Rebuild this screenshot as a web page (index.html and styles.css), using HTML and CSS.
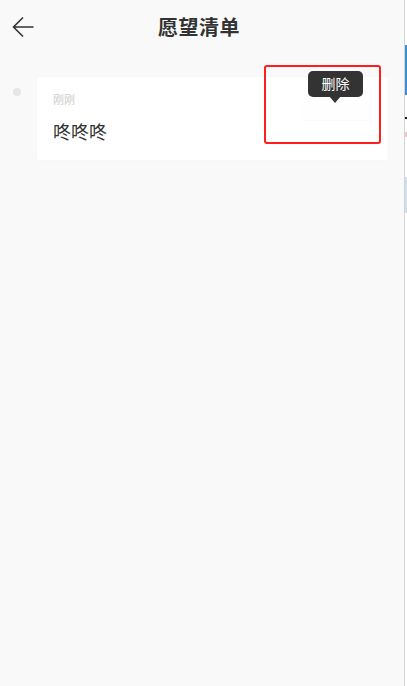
FILE: index.html
```html
<!DOCTYPE html>
<html lang="zh">
<head>
    <meta charset="UTF-8">
    <title>愿望清单</title>
    <link rel="stylesheet" href="styles.css">
</head>
<body>
    <div class="page">
        <div class="header">
            <a class="back" href="javascript:;">
                <svg width="22" height="22" viewBox="0 0 22 22"><path d="M11 1.5 L1.5 11 L11 20.5 M1.5 11 H21.5" fill="none" stroke="#333" stroke-width="1.6"/></svg>
            </a>
            <h1>愿望清单</h1>
        </div>

        <ul class="list">
            <li class="item">
                <em class="dot"></em>
                <div class="card">
                    <p class="time">刚刚</p>
                    <p class="text">咚咚咚</p>
                    <div class="mark"></div>
                    <div class="ghost"></div>
                    <div class="tip">删除<i></i></div>
                </div>
            </li>
        </ul>

        <div class="edge"><span class="b1"></span><span class="b2"></span><span class="b3"></span><span class="b4"></span></div>
    </div>
</body>
</html>
```

FILE: styles.css
```css
body,div,ul,li,p,h1{margin:0;padding:0;}
body{font:14px/1.5 "Liberation Sans","Noto Sans CJK SC",sans-serif;background:#f9f9f9;color:#333;}
ul{list-style-type:none;}
.page{position:relative;width:407px;height:686px;overflow:hidden;background:#f9f9f9;}
.header{position:relative;height:56px;display:flex;align-items:center;justify-content:center;padding-right:9px;}
.header h1{font-size:20px;font-weight:700;color:#333;letter-spacing:0.5px;}
.header .back{position:absolute;left:12px;top:16px;display:block;width:22px;height:22px;}
.list{padding:21px 19px 0 12px;}
.item{display:flex;align-items:flex-start;}
.item .dot{display:block;width:8px;height:8px;border-radius:50%;background:#e6e6e6;margin:11px 16px 0 1px;flex:none;}
.card{position:relative;flex:1;height:83px;background:#fff;border-radius:3px;box-shadow:0 0 2px rgba(0,0,0,0.03);padding:0 16px;}
.card .time{font-size:11px;line-height:14px;color:#cdcdcd;padding-top:16px;}
.card .text{font-size:18px;line-height:24px;color:#333;padding-top:14px;}
.mark{position:absolute;left:227px;top:-12px;width:113px;height:75px;border:2px solid #ff1d1d;border-radius:3px;}
.ghost{position:absolute;left:263px;top:27px;width:72px;height:16px;background:#fefefe;box-shadow:0 1px 1px rgba(0,0,0,0.015);}
.tip{position:absolute;left:271px;top:-6px;width:55px;height:26px;line-height:26px;border-radius:5px;background:#333;color:#fff;font-size:14px;text-align:center;}
.tip i{position:absolute;left:21px;bottom:-6px;width:0;height:0;border-left:6px solid transparent;border-right:6px solid transparent;border-top:7px solid #333;}
.edge{position:absolute;right:0;top:0;width:2px;height:686px;border-left:1px solid #d4d4d4;background:#fff;}
.edge span{position:absolute;left:0;width:2px;display:block;}
.edge .b1{top:45px;height:50px;background:#3b8fd9;}
.edge .b2{top:117px;height:2px;background:#111;}
.edge .b3{top:132px;height:5px;background:#f2c6c6;}
.edge .b4{top:177px;height:36px;background:#cfe0ea;}
```
